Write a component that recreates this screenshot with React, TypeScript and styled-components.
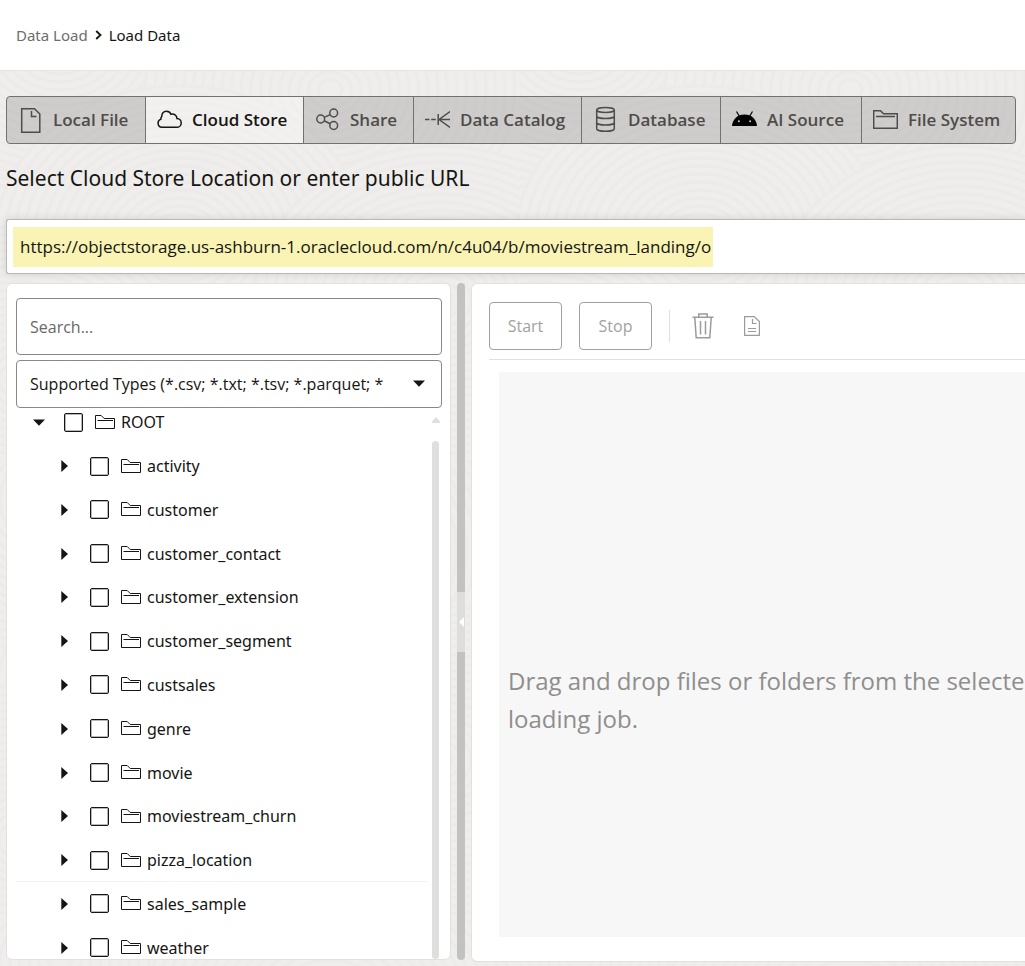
import React from "react";
import styled, { createGlobalStyle, css } from "styled-components";

const ink = "#161513";
const wideText = `"Noto Sans", "Open Sans", sans-serif`;

const GlobalStyle = createGlobalStyle`
  *, *::before, *::after { box-sizing: border-box; }
  body {
    margin: 0;
    background: #f0eeec;
    color: ${ink};
    font-family: "Open Sans", "Noto Sans", sans-serif;
    font-size: 16px;
    line-height: 24px;
  }
  button, input, select { font: inherit; color: inherit; margin: 0; }
`;

const Page = styled.div`
  position: relative;
  isolation: isolate;
  display: flex;
  flex-direction: column;
  min-height: 100vh;
  overflow: hidden;
`;

const Texture = styled.svg`
  position: absolute;
  inset: 0;
  width: 100%;
  height: 100%;
  z-index: -1;
`;

const Header = styled.header`
  display: flex;
  align-items: center;
  height: 71px;
  padding-left: 16px;
  background: #fff;
  border-bottom: 1px solid #e4e4e2;
`;

const Crumbs = styled.nav`
  display: flex;
  align-items: center;
  gap: 7px;
  font-family: ${wideText};
  font-size: 15px;
`;

const CrumbLink = styled.a`
  color: #6f6d6b;
  text-decoration: none;
`;

const Content = styled.main`
  flex: 1;
  display: flex;
  flex-direction: column;
  padding: 25px 0 4px 6px;
`;

const TabBar = styled.div`
  display: flex;
  height: 48px;
  margin-right: 9px;
  border: 1px solid #73716f;
  border-radius: 4px;
  overflow: hidden;
`;

const Tab = styled.button<{ $share: number; $active?: boolean }>`
  flex: ${(p) => p.$share} 1 ${(p) => p.$share}px;
  min-width: 0;
  display: flex;
  align-items: center;
  gap: 10px;
  padding: 0 0 0 11px;
  border: 0;
  background: rgba(22, 21, 19, 0.15);
  color: #4e4c4a;
  font-weight: 600;
  font-size: 17px;
  white-space: nowrap;
  & + & { border-left: 1px solid #73716f; }
  ${(p) =>
    p.$active &&
    css`
      background: rgba(255, 255, 255, 0.2);
      color: ${ink};
    `}
  svg { flex: none; }
`;

const Title = styled.h1`
  margin: 19px 0 26px;
  font-family: ${wideText};
  font-size: 21px;
  font-weight: 400;
  line-height: 30px;
`;

const UrlBox = styled.div`
  display: flex;
  align-items: center;
  height: 55px;
  padding-left: 6px;
  background: #fff;
  border: 1px solid #b9b8b6;
  border-right: 0;
  border-radius: 3px 0 0 3px;
  box-shadow: 0 0 8px rgba(0, 0, 0, 0.12);
`;

const UrlInput = styled.input`
  field-sizing: content;
  height: 40px;
  padding: 0 2px 0 7px;
  border: 0;
  background: #f9f3b4;
  font-size: 17px;
`;

const Workspace = styled.div`
  flex: 1;
  display: grid;
  grid-template-columns: minmax(0, 445fr) 8px minmax(0, 554fr);
  gap: 6px;
  margin-top: 9px;
`;

const BrowserPanel = styled.section`
  display: flex;
  flex-direction: column;
  margin-bottom: 2px;
  padding: 14px 8px 0 9px;
  background: #fff;
  border: 1px solid #e4e1dd;
  border-radius: 6px;
  overflow: hidden;
`;

const SearchInput = styled.input`
  height: 57px;
  margin-bottom: 5px;
  padding: 0 13px;
  border: 1px solid #8a8886;
  border-radius: 4px;
  &::placeholder { color: #6a6866; opacity: 1; }
`;

const SelectWrap = styled.div`
  position: relative;
  z-index: 1;
  svg {
    position: absolute;
    right: 17px;
    top: 20px;
    pointer-events: none;
  }
`;

const TypeSelect = styled.select`
  appearance: none;
  width: 100%;
  height: 48px;
  padding: 0 50px 0 13px;
  background: #fff;
  border: 1px solid #8a8886;
  border-radius: 4px;
`;

const TreeArea = styled.div`
  flex: 1;
  display: flex;
  min-height: 0;
  gap: 3px;
`;

const Tree = styled.ul`
  flex: 1;
  display: grid;
  grid-auto-rows: minmax(43px, 1fr);
  margin: -8px 0 -10px;
  padding: 0;
  list-style: none;
  font-family: ${wideText};
`;

const Row = styled.li<{ $level: number; $ruled?: boolean }>`
  display: flex;
  align-items: center;
  padding-left: ${(p) => 10 + p.$level * 26}px;
  border-top: 1px solid ${(p) => (p.$ruled ? "#f4f3f2" : "transparent")};
`;

const Expander = styled.button`
  display: grid;
  place-items: center;
  width: 25px;
  height: 24px;
  margin-right: 13px;
  padding: 0;
  border: 0;
  background: none;
`;

const RowLabel = styled.label`
  display: flex;
  align-items: center;
  white-space: nowrap;
  svg { margin: 0 6px 0 12px; }
`;

const Check = styled.input`
  appearance: none;
  width: 19px;
  height: 19px;
  border: 1px solid ${ink};
  border-radius: 2px;
  box-shadow: inset 0 0 0 1px rgba(22, 21, 19, 0.3);
`;

const ScrollTrack = styled.div`
  display: flex;
  flex-direction: column;
  align-items: center;
  gap: 18px;
  width: 9px;
  margin-right: 2px;
  padding-top: 9px;
`;

const ScrollThumb = styled.div`
  flex: 1;
  width: 7px;
  border-radius: 4px;
  background: #dfdfde;
`;

const Splitter = styled.div`
  display: flex;
  flex-direction: column;
  justify-content: center;
  margin-bottom: 2px;
  border-radius: 4px;
  background: #c2c2c2;
`;

const Collapse = styled.button`
  display: grid;
  place-items: center;
  height: 60px;
  padding: 0;
  border: 0;
  background: #dddddc;
`;

const JobPanel = styled.section`
  display: flex;
  flex-direction: column;
  padding: 18px 0 24px 17px;
  background: #fff;
  border: 1px solid #e4e1dd;
  border-right: 0;
  border-radius: 6px 0 0 6px;
`;

const Toolbar = styled.div`
  display: flex;
  align-items: center;
  gap: 17px;
  padding-bottom: 9px;
  border-bottom: 1px solid #e2e1e0;
`;

const ActionButton = styled.button`
  width: 73px;
  height: 48px;
  padding: 0;
  background: #fff;
  border: 1px solid #a2a1a0;
  border-radius: 4px;
  color: #a2a1a0;
`;

const Divider = styled.div`
  width: 1px;
  height: 32px;
  background: #dfdedd;
`;

const IconButton = styled.button`
  display: grid;
  place-items: center;
  width: 32px;
  height: 32px;
  padding: 0;
  border: 0;
  background: none;
  color: #9c9b9a;
`;

const DropZone = styled.div`
  flex: 1;
  margin: 12px 0 0 10px;
  padding: 290px 0 0 9px;
  background: #f7f7f7;
  color: #8f8e8d;
  font-size: 24px;
  line-height: 38px;
  overflow: hidden;
`;

const DropText = styled.p`
  margin: 0;
  white-space: pre;
`;

const line = { fill: "none", stroke: "currentColor", strokeWidth: 1.5 } as const;

const FileIcon = () => (
  <svg width="25" height="27" viewBox="0 0 25 27" {...line}>
    <path d="M3.7 1.7h12.8l5.3 5.3v18.3H3.7z M13.5 4v5.500h5" />
  </svg>
);
const CloudIcon = () => (
  <svg width="25" height="22" viewBox="0 0 25 22" {...line}>
    <path d="M5 18.3a4.2 4.2 0 0 1-1-8.2 2.6 2.6 0 0 1 .8-2.6C4.6 4.600 6.600 2.300 9.300 2.300c2.200 0 4 1.200 4.700 3 3-.9 5.800 1 6 4.300 2.300.1 4.200 1.900 4.200 4.300s-1.900 4.400-4.300 4.400z" />
  </svg>
);
const ShareIcon = () => (
  <svg width="25" height="25" viewBox="0 0 25 25" {...line}>
    <circle cx="5.700" cy="11" r="3.900" />
    <circle cx="18.700" cy="5" r="3.900" />
    <circle cx="18.700" cy="17.500" r="3.900" />
    <path d="M9.200 9.400l6-2.800M9.200 12.800l6 2.900" />
  </svg>
);
const CatalogIcon = () => (
  <svg width="25" height="20" viewBox="0 0 25 20" {...line}>
    <path d="M0 9.500h4.500M6.200 9.500h4.600M13.200 4v11M13.200 9.500H25M14 9.500l11-8M14 9.500l11 8" />
  </svg>
);
const DatabaseIcon = () => (
  <svg width="25" height="28" viewBox="0 0 25 28" {...line}>
    <ellipse cx="12.500" cy="4" rx="8.800" ry="2.500" />
    <path d="M3.700 4v18.700c0 1.400 3.900 2.600 8.800 2.600s8.800-1.200 8.800-2.600V4M3.700 10c0 1.400 3.900 2.600 8.800 2.600s8.800-1.200 8.800-2.600M3.700 16.400c0 1.400 3.900 2.600 8.800 2.600s8.800-1.200 8.800-2.600" />
  </svg>
);
const AndroidIcon = () => (
  <svg width="25" height="18" viewBox="0 0 25 18">
    <path d="M0 15C.4 8.300 5.500 3.500 12.500 3.500S24.600 8.300 25 15z" fill="#000" />
    <path d="M4.500.500l3 5M20.500.500l-3 5" stroke="#000" strokeWidth="1.200" />
    <circle cx="6.900" cy="10.200" r="1" fill="#cdcbca" />
    <circle cx="18.100" cy="10.200" r="1" fill="#cdcbca" />
  </svg>
);
const FolderLargeIcon = () => (
  <svg width="25" height="22" viewBox="0 0 25 22" {...line}>
    <path d="M.7 19.300V1.700h6.800l3 3h13.800v14.600z M3 7.500h19" />
  </svg>
);
const FolderIcon = () => (
  <svg width="20" height="15" viewBox="0 0 20 15" fill="none" stroke={ink}>
    <path d="M.5 13.500V.5h5.700l3 3h10.300v10z M2.500 5.500h15.500" />
  </svg>
);
const TrashIcon = () => (
  <svg width="22" height="26" viewBox="0 0 22 26" {...line}>
    <path d="M.5 4.300h21M6.800 4V1h8.400v3M2.800 4.500l1.400 20.300h13.600l1.400-20.300M8.500 8v13.500M13.500 8v13.500" />
  </svg>
);
const LogIcon = () => (
  <svg width="16" height="20" viewBox="0 0 16 20" {...line} strokeWidth={1.200}>
    <path d="M.6.600h9.600l5.200 5v13.800H.6z M8.500 3v4.500h4M4 12.500h8M4 15.500h8" />
  </svg>
);
const CaretDown = () => (
  <svg width="12" height="7" viewBox="0 0 12 7" fill={ink}>
    <path d="M0 .5h12L6 6.700z" />
  </svg>
);
const CaretRight = () => (
  <svg width="7" height="12" viewBox="0 0 7 12" fill={ink}>
    <path d="M.3 0v12L7 6z" />
  </svg>
);

const rings = [154, 146, 138, 130, 122, 114, 106, 98, 90, 82, 74, 66, 58, 50, 42, 34, 26, 18, 10];
const hills = [
  { x: 60, y: 40 },
  { x: 330, y: 90 },
  { x: 180, y: 240 },
  { x: 440, y: 300 },
  { x: 20, y: 380 },
];

const tabs = [
  { name: "Local File", share: 138, icon: <FileIcon /> },
  { name: "Cloud Store", share: 158, icon: <CloudIcon />, active: true },
  { name: "Share", share: 110, icon: <ShareIcon /> },
  { name: "Data Catalog", share: 168, icon: <CatalogIcon /> },
  { name: "Database", share: 139, icon: <DatabaseIcon /> },
  { name: "AI Source", share: 141, icon: <AndroidIcon /> },
  { name: "File System", share: 154, icon: <FolderLargeIcon /> },
];

const folders = [
  "activity",
  "customer",
  "customer_contact",
  "customer_extension",
  "customer_segment",
  "custsales",
  "genre",
  "movie",
  "moviestream_churn",
  "pizza_location",
  "sales_sample",
  "weather",
];

export default function App() {
  return (
    <>
      <GlobalStyle />
      <Page>
        <Texture aria-hidden="true">
          <defs>
            <pattern id="contours" width="520" height="460" patternUnits="userSpaceOnUse">
              {hills.map((h) =>
                rings.map((r) => (
                  <ellipse
                    key={`${h.x}-${r}`}
                    cx={h.x}
                    cy={h.y}
                    rx={r * 1.2}
                    ry={r}
                    fill="#f0eeec"
                    stroke="#edebe9"
                    strokeWidth="3"
                  />
                ))
              )}
            </pattern>
          </defs>
          <rect width="100%" height="100%" fill="url(#contours)" />
        </Texture>

        <Header>
          <Crumbs aria-label="Breadcrumb">
            <CrumbLink href="#data-load">Data Load</CrumbLink>
            <svg width="7" height="10" viewBox="0 0 7 10" fill="none" stroke={ink} strokeWidth="1.800">
              <path d="M1.200 1L5.500 5 1.200 9" />
            </svg>
            <span aria-current="page">Load Data</span>
          </Crumbs>
        </Header>

        <Content>
          <TabBar role="tablist">
            {tabs.map((t) => (
              <Tab key={t.name} role="tab" aria-selected={!!t.active} $share={t.share} $active={t.active}>
                {t.icon}
                {t.name}
              </Tab>
            ))}
          </TabBar>

          <Title id="location-title">Select Cloud Store Location or enter public URL</Title>
          <UrlBox>
            <UrlInput
              aria-labelledby="location-title"
              defaultValue="https://objectstorage.us-ashburn-1.oraclecloud.com/n/c4u04/b/moviestream_landing/o"
            />
          </UrlBox>

          <Workspace>
            <BrowserPanel>
              <SearchInput aria-label="Search" placeholder="Search..." />
              <SelectWrap>
                <TypeSelect aria-label="File types">
                  <option>Supported Types (*.csv; *.txt; *.tsv; *.parquet; *</option>
                </TypeSelect>
                <CaretDown />
              </SelectWrap>
              <TreeArea>
                <Tree>
                  <Row $level={0}>
                    <Expander aria-label="Collapse ROOT">
                      <CaretDown />
                    </Expander>
                    <RowLabel>
                      <Check type="checkbox" />
                      <FolderIcon />
                      ROOT
                    </RowLabel>
                  </Row>
                  {folders.map((f) => (
                    <Row key={f} $level={1} $ruled={f === "sales_sample"}>
                      <Expander aria-label={`Expand ${f}`}>
                        <CaretRight />
                      </Expander>
                      <RowLabel>
                        <Check type="checkbox" />
                        <FolderIcon />
                        {f}
                      </RowLabel>
                    </Row>
                  ))}
                </Tree>
                <ScrollTrack>
                  <svg width="8" height="6" viewBox="0 0 8 6" fill="#dfdfde">
                    <path d="M4 0l4 4.500V6H0V4.500z" />
                  </svg>
                  <ScrollThumb />
                </ScrollTrack>
              </TreeArea>
            </BrowserPanel>

            <Splitter>
              <Collapse aria-label="Collapse panel">
                <svg width="5" height="10" viewBox="0 0 5 10" fill="#fff">
                  <path d="M5 0v10L0 5z" />
                </svg>
              </Collapse>
            </Splitter>

            <JobPanel>
              <Toolbar>
                <ActionButton>Start</ActionButton>
                <ActionButton>Stop</ActionButton>
                <Divider />
                <IconButton aria-label="Delete">
                  <TrashIcon />
                </IconButton>
                <IconButton aria-label="Job log">
                  <LogIcon />
                </IconButton>
              </Toolbar>
              <DropZone>
                <DropText>{"Drag and drop files or folders from the selected\nloading job."}</DropText>
              </DropZone>
            </JobPanel>
          </Workspace>
        </Content>
      </Page>
    </>
  );
}
